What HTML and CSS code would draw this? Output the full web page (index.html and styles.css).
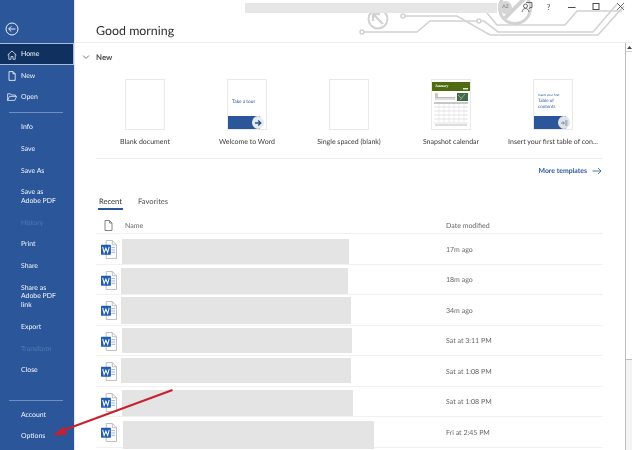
FILE: index.html
```html
<!DOCTYPE html>
<html lang="en">
<head>
<meta charset="utf-8">
<title>Word Home</title>
<link rel="stylesheet" href="styles.css">
</head>
<body>
<svg class="defs" width="0" height="0" aria-hidden="true">
  <symbol id="word" viewBox="0 0 17 20">
    <path d="M5.500 .5H12L16.500 5V19.500H5.500Z" fill="#fff" stroke="#a9a9a9" stroke-width=".8"/>
    <path d="M12 .5V5H16.500" fill="none" stroke="#a9a9a9" stroke-width=".8"/>
    <path d="M11 8H15M11 10.500H15M11 13H15" stroke="#8fb0dc" stroke-width="1"/>
    <rect x="0" y="5" width="10.500" height="10.500" rx=".6" fill="#1f5bb0"/>
    <path d="M1.800 7.300L3.300 13.200L5.200 8.600L7.100 13.200L8.700 7.300" fill="none" stroke="#fff" stroke-width="1.100"/>
  </symbol>
</svg>
<div class="app">
  <aside class="side">
    <div class="back">
      <svg width="14" height="14" viewBox="0 0 14 14" fill="none" stroke="#fff" stroke-width=".9"><circle cx="7" cy="7" r="6"/><path d="M10.400 7H3.800M6.300 4.400L3.700 7L6.300 9.600"/></svg>
    </div>
    <nav class="nav">
      <a class="item sel"><svg class="ic" width="10" height="10" viewBox="0 0 10 10" fill="none" stroke="#fff" stroke-width=".7"><path d="M.6 5L5 1L9.400 5M1.800 4.200V9.300H4V6.500H6V9.300H8.200V4.200"/></svg>Home</a>
      <a class="item"><svg class="ic" width="10" height="10" viewBox="0 0 10 10" fill="none" stroke="#fff" stroke-width=".8"><path d="M2 .6H6L8.200 2.800V9.400H2ZM6 .6V2.800H8.200"/></svg>New</a>
      <a class="item"><svg class="ic" width="10" height="10" viewBox="0 0 10 10" fill="none" stroke="#fff" stroke-width=".7"><path d="M.6 8.400V1.800H3.600L4.600 3H8.400V4.400M.6 8.400L2.400 4.400H9.600L7.800 8.400Z"/></svg>Open</a>
      <div class="rule"></div>
      <a class="item">Info</a>
      <a class="item">Save</a>
      <a class="item">Save As</a>
      <a class="item">Save as<br>Adobe PDF</a>
      <a class="item off">History</a>
      <a class="item">Print</a>
      <a class="item">Share</a>
      <a class="item">Share as<br>Adobe PDF<br>link</a>
      <a class="item">Export</a>
      <a class="item off">Transform</a>
      <a class="item">Close</a>
    </nav>
    <nav class="nav nav-end">
      <div class="rule"></div>
      <a class="item">Account</a>
      <a class="item">Options</a>
    </nav>
  </aside>

  <main class="main">
    <header class="top">
      <svg class="art" width="557" height="42" viewBox="75 0 557 42" fill="none" stroke="#d2d2d2" stroke-width="1.600">
        <path d="M364 32H417L430 21H477M482 21H484L498 32H593L617 4"/>
        <path d="M405 16H457L490 35H598L624 6"/>
        <path d="M487 13L497 25H565L577 11H622"/>
        <circle cx="362" cy="32" r="2"/><circle cx="403" cy="16" r="2"/><circle cx="479" cy="21" r="2"/>
        <circle cx="378" cy="19" r="9.500" stroke-width="2"/>
        <path d="M383 24L374 15M373 21V14H380" stroke-width="2.400"/>
        <circle cx="515" cy="8" r="15.500" stroke-width="3"/>
        <path d="M505 18L526 -3" stroke-width="4"/>
      </svg>
      <h1 class="greet">Good morning</h1>
      <div class="strip"></div>
      <div class="winbar">
        <span class="wc wc-n"><span class="az">AZ</span></span>
        <span class="wc wc-n"><svg width="12" height="12" viewBox="0 0 12 12" fill="none" stroke="#4a4a4a" stroke-width=".8"><circle cx="4.500" cy="5" r="2"/><path d="M1 11C1.500 8.500 3 7.500 4.500 7.500S7.500 8.500 8 11M5 1.500H11V6.500H9L8 8"/></svg></span>
        <span class="wc wc-n help">?</span>
        <span class="wc"><svg width="10" height="10" viewBox="0 0 10 10" stroke="#4a4a4a"><path d="M1 5.500H8.500"/></svg></span>
        <span class="wc"><svg width="10" height="10" viewBox="0 0 10 10" fill="none" stroke="#4a4a4a"><rect x="2" y="1.500" width="6" height="6"/></svg></span>
        <span class="wc"><svg width="10" height="10" viewBox="0 0 10 10" fill="none" stroke="#4a4a4a" stroke-width=".8"><path d="M1 1L8 8M8 1L1 8"/></svg></span>
      </div>
    </header>

    <div class="body">
      <div class="content">
        <div class="sec-head">
          <svg width="8" height="6" viewBox="0 0 8 6" fill="none" stroke="#555" stroke-width=".8"><path d="M1 1.500L4 4.500L7 1.500"/></svg>
          <span>New</span>
        </div>

        <div class="templates">
          <div class="tpl">
            <div class="thumb"></div>
            <div class="cap">Blank document</div>
          </div>
          <div class="tpl">
            <div class="thumb">
              <div class="thumb-txt tour">Take a tour</div>
              <div class="band"><span class="badge"><svg width="8" height="8" viewBox="0 0 8 8" fill="none" stroke="#2b4f80" stroke-width="1.300"><path d="M1 4H6.500M4.200 1.500L6.800 4L4.200 6.500"/></svg></span></div>
            </div>
            <div class="cap">Welcome to Word</div>
          </div>
          <div class="tpl">
            <div class="thumb"></div>
            <div class="cap">Single spaced (blank)</div>
          </div>
          <div class="tpl">
            <div class="thumb cal">
              <svg width="38" height="49" viewBox="0 0 38 49">
                <rect x="0" y="2" width="38" height="9" fill="#4e6b12"/>
                <text x="3" y="6.500" font-family="Liberation Serif" font-size="3.800" font-weight="700" fill="#fff">January</text>
                <rect x="31" y="8" width="5" height="1.500" fill="#dfe6c8"/>
                <rect x="3" y="13" width="3" height="4" fill="#c8cdb8"/>
                <path d="M3 17.500H23M3 19H23" stroke="#a9a9a9" stroke-width=".8"/>
                <rect x="25" y="13" width="11" height="8" fill="#3f6b4a"/>
                <path d="M26 15L30 19M33 14L28 20" stroke="#9ab27a" stroke-width="1"/>
                <path d="M2 23H36M2 27H36M2 31H36M2 35H36M2 39H36M2 43H36" stroke="#c9c9c9" stroke-width=".5"/>
                <path d="M7 23V43M12 23V43M17 23V43M22 23V43M27 23V43M32 23V43" stroke="#d8d8d8" stroke-width=".5"/>
                <path d="M2 23H36" stroke="#888" stroke-width=".8"/>
                <path d="M3 45H35" stroke="#aaa" stroke-width=".8"/>
              </svg>
            </div>
            <div class="cap">Snapshot calendar</div>
          </div>
          <div class="tpl">
            <div class="thumb">
              <div class="thumb-txt toc">
                <span class="toc-sm">Insert your first</span>
                <span>Table of</span>
                <span>contents</span>
              </div>
              <div class="band"><span class="badge badge-grey"><svg width="8" height="8" viewBox="0 0 8 8" fill="none" stroke="#6f7f95" stroke-width=".9"><path d="M1 4H4M3 2.500L4.500 4L3 5.500M5 2H7.500M5 4H7.500M5 6H7.500"/></svg></span></div>
            </div>
            <div class="cap">Insert your first table of con...</div>
          </div>
        </div>

        <div class="more">
          <a class="more-link">More templates</a>
          <svg width="10" height="8" viewBox="0 0 10 8" fill="none" stroke="#2b579a" stroke-width=".8"><path d="M.5 4H9M6 1L9 4L6 7"/></svg>
        </div>

        <div class="tabs">
          <span class="tab active">Recent</span>
          <span class="tab">Favorites</span>
        </div>

        <div class="list-head row-grid">
          <svg class="doc-ic" width="9" height="11" viewBox="0 0 9 11" fill="none" stroke="#666" stroke-width=".8"><path d="M1 .5H5.500L8 3V10.500H1ZM5.500 .5V3H8"/></svg>
          <span>Name</span>
          <span>Date modified</span>
        </div>

        <div class="row row-grid">
          <svg class="word" width="16" height="19"><use href="#word"/></svg>
          <div class="blur b1"></div>
          <span class="date">17m ago</span>
        </div>
        <div class="row row-grid">
          <svg class="word" width="16" height="19"><use href="#word"/></svg>
          <div class="blur b2"></div>
          <span class="date">18m ago</span>
        </div>
        <div class="row row-grid">
          <svg class="word" width="16" height="19"><use href="#word"/></svg>
          <div class="blur b3"></div>
          <span class="date">34m ago</span>
        </div>
        <div class="row row-grid">
          <svg class="word" width="16" height="19"><use href="#word"/></svg>
          <div class="blur b4"></div>
          <span class="date">Sat at 3:11 PM</span>
        </div>
        <div class="row row-grid">
          <svg class="word" width="16" height="19"><use href="#word"/></svg>
          <div class="blur b5"></div>
          <span class="date">Sat at 1:08 PM</span>
        </div>
        <div class="row row-grid">
          <svg class="word" width="16" height="19"><use href="#word"/></svg>
          <div class="blur b6"></div>
          <span class="date">Sat at 1:08 PM</span>
        </div>
        <div class="row row-grid">
          <svg class="word" width="16" height="19"><use href="#word"/></svg>
          <div class="blur b7"></div>
          <span class="date">Fri at 2:45 PM</span>
        </div>
      </div>

      <div class="scroll">
        <div class="sc-btn"><svg width="5" height="3" viewBox="0 0 5 3"><path d="M0 3L2.500 0L5 3Z" fill="#444"/></svg></div>
        <div class="sc-thumb"></div>
        <div class="sc-track"></div>
      </div>
    </div>
  </main>

  <svg class="pointer" width="632" height="450" viewBox="0 0 632 450">
    <path d="M172.500 390L60 431.500" stroke="#c9202e" stroke-width="2" fill="none"/>
    <path d="M53 435.500L64 426.500L67 434.500Z" fill="#c9202e"/>
  </svg>
</div>
</body>
</html>
```
FILE: styles.css
```css
* { box-sizing: border-box; }
html, body { margin: 0; padding: 0; }
body {
  width: 632px;
  height: 450px;
  overflow: hidden;
  background: #fff;
  font-family: Lato, "Noto Sans", sans-serif;
  text-rendering: geometricPrecision;
  color: #444;
}
.defs { display: block; height: 0; }
.app { position: relative; display: flex; width: 632px; height: 450px; overflow: hidden; will-change: transform; }

/* sidebar */
.side {
  width: 75px;
  flex: none;
  display: flex;
  flex-direction: column;
  background: #2b579a;
  border-right: 1px solid #dce7f5;
  color: #f2f6fb;
  font-size: 6.9px;
  line-height: 8.7px;
}
.back { height: 43px; padding: 22px 0 0 5px; }
.back svg { display: block; }
.nav { display: flex; flex-direction: column; }
.nav-end { margin-top: auto; padding-bottom: 3px; }
.item {
  position: relative;
  display: block;
  padding: 7px 0 6px 21px;
}
.item.sel {
  background: #10315f;
  border: 1px solid #a9bcd8;
  border-left: 0;
  padding: 6px 0 5px 21px;
  height: 21.7px;
}
.item.off { color: #5079b4; }
.ic { position: absolute; left: 7px; top: 6px; }
.rule { height: 8px; position: relative; }
.rule::after {
  content: "";
  position: absolute;
  left: 9px;
  right: 11px;
  top: 4px;
  height: 1px;
  background: #6e8fbf;
}

/* main */
.main { flex: 1; min-width: 0; display: flex; flex-direction: column; }
.top {
  position: relative;
  height: 43px;
  flex: none;
  border-bottom: 1px solid #ededed;
  display: flex;
  align-items: flex-start;
  justify-content: space-between;
}
.art { position: absolute; left: 0; top: 0; }
.greet {
  position: relative;
  margin: 22px 0 0 21px;
  font-size: 12.4px;
  line-height: 18px;
  font-weight: 400;
  color: #2f2f2f;
}
.strip {
  position: absolute;
  left: 170px;
  top: 3px;
  width: 252px;
  height: 10px;
  background: #e6e6e6;
}
.winbar {
  position: relative;
  display: flex;
  height: 14px;
  margin-right: -1px;
  color: #4a4a4a;
}
.wc { width: 24.6px; flex: none; display: flex; align-items: center; justify-content: center; }
.wc-n { width: 21.5px; }
.wc svg { display: block; }
.az {
  width: 13px;
  height: 13px;
  border-radius: 50%;
  background: #d6d6d6;
  color: #8a8a8a;
  font-size: 5px;
  font-weight: 700;
  line-height: 13px;
  text-align: center;
}
.help { font-size: 8px; }

.body { flex: 1; min-height: 0; display: flex; }
.content { width: 550px; flex: none; padding: 4px 22px 0 21px; font-size: 7px; }

.sec-head {
  height: 20px;
  margin-left: -14px;
  display: flex;
  align-items: center;
  gap: 6px;
  font-size: 7.8px;
  font-weight: 700;
  color: #4a4a4a;
}

.templates {
  display: grid;
  grid-template-columns: repeat(5, 102px);
  margin: 12px 0 0;
  padding: 0 0 12px;
  border-bottom: 1px solid #efefef;
}
.tpl { display: flex; flex-direction: column; align-items: center; margin-left: -4px; }
.thumb {
  position: relative;
  width: 40px;
  height: 51px;
  border: 1px solid #e9e9e9;
  background: #fff;
  display: flex;
  flex-direction: column;
  justify-content: flex-end;
}
.cal svg { display: block; }
.cal { justify-content: flex-start; }
.thumb-txt { flex: 1; color: #2b579a; }
.tour { padding: 19px 0 0 4px; font-size: 4.8px; line-height: 6px; white-space: nowrap; }
.toc {
  padding: 13px 0 0 4px;
  display: flex;
  flex-direction: column;
  font-size: 4.6px;
  line-height: 5.6px;
  white-space: nowrap;
}
.toc-sm { font-size: 3.2px; line-height: 5px; }
.band { position: relative; height: 13px; background: linear-gradient(#2b579a, #2b579a) left / 32px 100% no-repeat; }
.badge {
  position: absolute;
  right: 2px;
  top: 0;
  width: 12px;
  height: 13px;
  border-radius: 50%;
  background: #e6ebf3;
  display: flex;
  align-items: center;
  justify-content: center;
}
.badge-grey { background: #dfe3e8; }
.cap { padding-top: 6.5px; font-size: 7px; line-height: 10px; white-space: nowrap; color: #3a3a3a; }
.templates { padding-bottom: 11.5px; }

.more {
  height: 24px;
  display: flex;
  align-items: center;
  justify-content: flex-end;
  gap: 5px;
  padding-right: 1px;
  color: #2b579a;
}
.more-link { font-size: 6.9px; font-weight: 700; }

.tabs { display: flex; gap: 15px; height: 17px; margin-top: 10px; padding-left: 3px; font-size: 7.6px; }
.tab { line-height: 16px; color: #555; }
.tab.active { color: #333; border-bottom: 2px solid #2b579a; padding: 0 1px; margin-left: -1px; }

.row-grid { display: grid; grid-template-columns: 25px 325px 1fr; }
.list-head {
  height: 24px;
  padding-top: 8px;
  align-items: center;
  border-bottom: 1px solid #f1f1f1;
  color: #666;
  font-size: 7px;
}
.list-head span:nth-of-type(1) { padding-left: 4px; }
.doc-ic { margin-left: 8px; }
.row {
  height: 30.5px;
  grid-template-rows: 29.5px;
  border-bottom: 1px solid #f1f1f1;
  align-items: center;
  color: #666;
  font-size: 7px;
}
.word { margin-left: 5px; margin-top: 2px; }
.date { display: block; margin-top: 2px; }
.blur { background: #e4e4e4; height: 26px; align-self: start; }
.b1 { margin: 5px 97px 0 1px; height: 25px; }
.b2 { margin: 3px 98px 0 0; }
.b3 { margin: 2px 95px 0 0; height: 27px; }
.b4 { margin: 2px 94px 0 1px; height: 25px; }
.b5 { margin: 2px 95px 0 0; height: 25px; }
.b6 { margin: 3px 93px 0 1px; }
.b7 { margin: 4px 72px 0 2px; height: 28px; }

/* scrollbar */
.scroll {
  width: 7px;
  flex: none;
  display: flex;
  flex-direction: column;
  background: #f3f3f3;
  border-left: 1px solid #bdbdbd;
}
.sc-btn {
  height: 9px;
  flex: none;
  background: #fff;
  border-bottom: 1px solid #cfcfcf;
  display: flex;
  align-items: center;
  justify-content: center;
}
.sc-thumb { height: 308px; flex: none; background: #fff; border-bottom: 1px solid #bdbdbd; }
.sc-track { flex: 1; }

.pointer { position: absolute; left: 0; top: 0; pointer-events: none; }
```
